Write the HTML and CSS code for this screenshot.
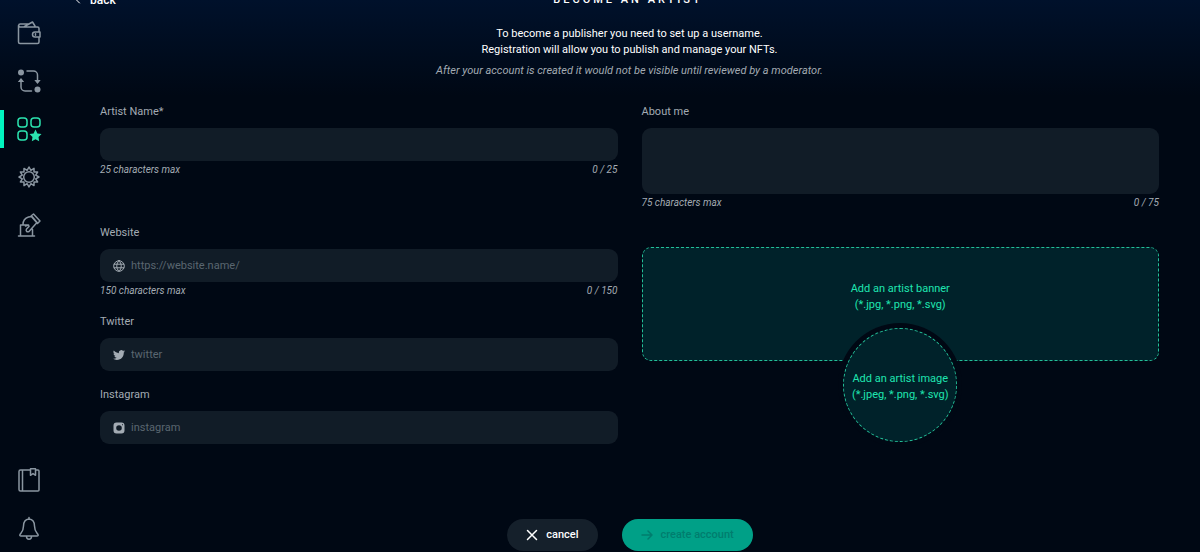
FILE: index.html
```html
<!DOCTYPE html>
<html lang="en">
<head>
	<meta charset="UTF-8">
	<meta name="viewport" content="width=device-width,initial-scale=1">
	<title>Become an artist</title>

	<link rel="stylesheet" href="styles.css">
</head>
<body>

	<nav class="sidebar">
		<a href="#wallet" aria-label="Wallet">
			<svg class="icon" viewBox="0 0 24 24"><path d="M22 11V7.500A1.500 1.500 0 0 0 20.500 6H3.200a1.500 1.500 0 0 1 0-3H12M1.500 4.500V21A1.500 1.500 0 0 0 3 22.500h17.500A1.500 1.500 0 0 0 22 21v-5M7.500 5.500L15.500 1l2.500 4M23 11h-5a2.500 2.500 0 0 0 0 5h5zM18.500 12.700v1.600"/></svg>
		</a>
		<a href="#swap" aria-label="Swap">
			<svg class="icon" viewBox="0 0 24 24"><circle class="solid" cx="4" cy="3.500" r="3"/><circle class="solid" cx="20.500" cy="20.500" r="3"/><path d="M10 2h6.500a4 4 0 0 1 4 4v6M14.500 22H8a4 4 0 0 1-4-4v-6"/><path class="solid" d="M17.300 11h6.400l-3.200 4zM.800 13h6.400L4 9z"/></svg>
		</a>
		<a href="#artist" class="active" aria-label="Artist">
			<svg class="icon" viewBox="0 0 24 24"><rect x="1" y="1" width="9" height="9" rx="3"/><rect x="14" y="1" width="9" height="9" rx="3"/><rect x="1" y="14" width="9" height="9" rx="3"/><path class="solid" d="M18.500 12.500l1.900 3.900 4.100.6-3 3 .7 4.200-3.700-2-3.700 2 .7-4.200-3-3 4.100-.6z"/></svg>
		</a>
		<a href="#settings" aria-label="Settings">
			<svg class="icon" viewBox="0 0 24 24"><circle cx="12" cy="12" r="5.300"/><path d="M12 2l1.900 3.300 3.100-1.900v3.600h3.600l-1.900 3.100 3.300 1.900-3.300 1.900 1.900 3.100h-3.600v3.600l-3.100-1.900L12 22l-1.900-3.300-3.100 1.900v-3.600H3.400l1.900-3.100L2 12l3.300-1.900L3.400 7H7V3.400l3.100 1.900z"/></svg>
		</a>
		<a href="#vote" aria-label="Vote">
			<svg class="icon" viewBox="0 0 24 24"><path d="M1.500 23h16M3.500 22.500V12h8M15.500 22.500v-6M6 11.500c0-4 2.500-6.500 5.500-7.500l3.500-.5 5 6-8 9c-2 1-3.500-.5-2.500-2.500l2.500-2.500-.5-1.500-3 1M14 3l2.500-2 6.500 7-2.500 2.500z"/></svg>
		</a>
		<a href="#library" class="push" aria-label="Library">
			<svg class="icon" viewBox="0 0 24 24"><path d="M13.500 2H3.500A1.500 1.500 0 0 0 2 3.500v18A1.500 1.500 0 0 0 3.500 23H21a1 1 0 0 0 1-1V3a1 1 0 0 0-1-1h-2.500M5.500 2v21M13.500.800h5v6.500L16 5.500l-2.500 1.800z"/></svg>
		</a>
		<a href="#notifications" aria-label="Notifications">
			<svg class="icon" viewBox="0 0 24 24"><path d="M12 1.500v1.500M12 3c-4 .5-5.500 3.500-5.500 7 0 5-1.500 6-3.500 8.500-.5 1 0 1.500 1 1.500h16c1 0 1.500-.5 1-1.500-2-2.500-3.500-3.500-3.500-8.500 0-3.500-1.500-6.500-5.500-7zM9.500 20.500c0 3.500 5 3.500 5 0"/></svg>
		</a>
	</nav>

	<main>
		<header>
			<a href="#back" class="back"><svg viewBox="0 0 8 8"><path d="M5.500 1l-3 3 3 3"/></svg>back</a>
			<h1>BECOME AN ARTIST</h1>
		</header>

		<div class="intro">
			<p>To become a publisher you need to set up a username.<br>Registration will allow you to publish and manage your NFTs.</p>
			<p class="note">After your account is created it would not be visible until reviewed by a moderator.</p>
		</div>

		<form>
			<div class="columns">
				<div class="column">
					<div class="field name">
						<label for="name">Artist Name*</label>
						<div class="box"><input type="text" id="name" maxlength="25"></div>
						<p class="hint"><span>25 characters max</span><span>0 / 25</span></p>
					</div>
					<div class="field">
						<label for="website">Website</label>
						<div class="box">
							<svg viewBox="0 0 12 12"><path d="M6 .700a5.300 5.300 0 1 0 0 10.600A5.300 5.300 0 1 0 6 .700zM6 .700c-3 3-3 7.600 0 10.600 3-3 3-7.600 0-10.600zM1.200 4.200h9.600M1.200 7.800h9.600"/></svg>
							<input type="text" id="website" placeholder="https://website.name/" maxlength="150">
						</div>
						<p class="hint"><span>150 characters max</span><span>0 / 150</span></p>
					</div>
					<div class="field">
						<label for="twitter">Twitter</label>
						<div class="box">
							<svg viewBox="0 0 24 24"><path class="solid" d="M23.950 4.570a10 10 0 0 1-2.820.780 4.960 4.960 0 0 0 2.160-2.720c-.950.550-2 .950-3.130 1.180a4.920 4.920 0 0 0-8.380 4.480C7.690 8.090 4.070 6.130 1.640 3.160a4.920 4.920 0 0 0 1.520 6.570 4.900 4.900 0 0 1-2.230-.610v.060a4.920 4.920 0 0 0 3.950 4.830 5 5 0 0 1-2.210.080 4.940 4.940 0 0 0 4.600 3.420A9.870 9.870 0 0 1 0 19.540a13.990 13.990 0 0 0 7.560 2.210c9.050 0 14-7.500 14-13.980l-.020-.630a9.940 9.940 0 0 0 2.410-2.570z"/></svg>
							<input type="text" id="twitter" placeholder="twitter">
						</div>
					</div>
					<div class="field">
						<label for="instagram">Instagram</label>
						<div class="box">
							<svg viewBox="0 0 12 12"><path class="solid" fill-rule="evenodd" d="M3.500.500h5a3 3 0 0 1 3 3v5a3 3 0 0 1-3 3h-5a3 3 0 0 1-3-3v-5a3 3 0 0 1 3-3zM6 3.200a2.800 2.800 0 1 0 0 5.600 2.800 2.800 0 1 0 0-5.600zM9 2.200v1h1v-1z"/></svg>
							<input type="text" id="instagram" placeholder="instagram">
						</div>
					</div>
				</div>

				<div class="column">
					<div class="field">
						<label for="about">About me</label>
						<textarea id="about" maxlength="75"></textarea>
						<p class="hint"><span>75 characters max</span><span>0 / 75</span></p>
					</div>
					<div class="uploads">
						<button type="button" class="banner">Add an artist banner<br>(*.jpg, *.png, *.svg)</button>
						<button type="button" class="avatar">Add an artist image<br>(*.jpeg, *.png, *.svg)</button>
					</div>
				</div>
			</div>

			<div class="actions">
				<button type="button" class="cancel"><svg viewBox="0 0 12 12"><path d="M1.500 1.500l9 9M10.500 1.500l-9 9"/></svg>cancel</button>
				<button type="submit" class="create" disabled><svg viewBox="0 0 12 12"><path d="M1 6h10M7 2l4 4-4 4"/></svg>create account</button>
			</div>
		</form>
	</main>

</body>
</html>
```
FILE: styles.css
```css
* {
	box-sizing: border-box;
}

body {
	margin: 0;
	min-height: 100vh;
	overflow: hidden;
	background: #000814 linear-gradient(#00112b, #000814 96px) no-repeat;
	font: 11px/16px Roboto, "Liberation Sans", sans-serif;
	color: #a3abb3;
}

h1, p {
	margin: 0;
}

svg {
	fill: none;
	stroke: currentColor;
	stroke-linecap: round;
	stroke-linejoin: round;
	flex: none;
}

svg .solid {
	fill: currentColor;
	stroke: none;
}

button, input, textarea {
	font: inherit;
	color: inherit;
	border: 0;
}

/* sidebar */
.sidebar {
	position: fixed;
	top: 0;
	bottom: 0;
	left: 0;
	width: 60px;
	padding-top: 9px;
	display: flex;
	flex-direction: column;
}

.sidebar a {
	display: flex;
	align-items: center;
	height: 48px;
	padding-left: 17px;
	color: #8a96a1;
}

.sidebar .push {
	margin-top: auto;
}

.sidebar .active {
	height: 38px;
	margin: 5px 0;
	padding-left: 13px;
	border-left: 4px solid #00f5c0;
	color: #2be3af;
}

.sidebar .icon {
	width: 24px;
	height: 24px;
	stroke-width: 1.500;
	overflow: visible;
}

/* the page header is scrolled partly out of view */
main {
	margin: -8px 0 0 60px;
}

header {
	display: grid;
	grid-template-columns: 1fr auto 1fr;
	padding: 0 18px 0 14px;
	color: #ffffff;
}

header h1 {
	font-size: 11px;
	line-height: 16px;
	font-weight: 500;
	letter-spacing: 3px;
}

.back {
	display: flex;
	align-items: center;
	gap: 8px;
	color: #ffffff;
	font-size: 12px;
	font-weight: 500;
	text-decoration: none;
}

.back svg {
	width: 8px;
	height: 8px;
}

.intro {
	padding: 18px 41px 25px 40px;
	text-align: center;
	color: #ffffff;
}

.intro .note {
	margin-top: 5px;
	font-style: italic;
	color: #a3abb3;
}

/* form */
.columns {
	display: grid;
	grid-template-columns: 1fr 1fr;
	gap: 24px;
	padding: 0 41px 0 40px;
}

.field {
	margin-bottom: 16px;
}

.field.name {
	margin-bottom: 48px;
}

.field label {
	display: block;
	margin-bottom: 8px;
}

.box, textarea {
	border-radius: 9px;
	background: #111c27;
}

.box {
	display: flex;
	align-items: center;
	gap: 6px;
	height: 33px;
	padding: 0 13px;
}

.box svg {
	width: 12px;
	height: 12px;
}

.box input {
	flex: 1;
	min-width: 0;
	padding: 0;
	background: none;
}

.box input::placeholder {
	color: #5a6670;
}

textarea {
	display: block;
	width: 100%;
	height: 66px;
	padding: 8px 13px;
	resize: none;
}

.hint {
	display: flex;
	justify-content: space-between;
	margin-top: 2px;
	font-size: 10px;
	line-height: 14px;
	font-style: italic;
}

/* uploads */
.uploads {
	position: relative;
	margin-top: 37px;
	color: #1fe5b0;
}

.banner, .avatar {
	border: 1px dashed #23bf98;
	background: #00222a;
	height: 114px;
	padding: 0;
}

.banner {
	display: block;
	width: 100%;
	padding-bottom: 14px;
	border-radius: 9px;
}

.avatar {
	position: absolute;
	top: 81px;
	left: 50%;
	width: 114px;
	margin-left: -57px;
	padding-top: 4px;
	border-radius: 50%;
	box-shadow: 0 0 0 5px #000814;
	white-space: nowrap;
}

/* buttons */
.actions {
	display: flex;
	justify-content: center;
	gap: 24px;
	margin-top: 59px;
}

.actions button {
	display: flex;
	align-items: center;
	gap: 8px;
	height: 32px;
	padding: 0 19px;
	border-radius: 16px;
}

.actions svg {
	width: 12px;
	height: 12px;
	stroke-width: 1.500;
}

.cancel {
	background: #15202b;
	color: #ffffff;
	font-weight: 500;
}

.create {
	background: #00a087;
	color: #007d6e;
	font-weight: 500;
}
```
